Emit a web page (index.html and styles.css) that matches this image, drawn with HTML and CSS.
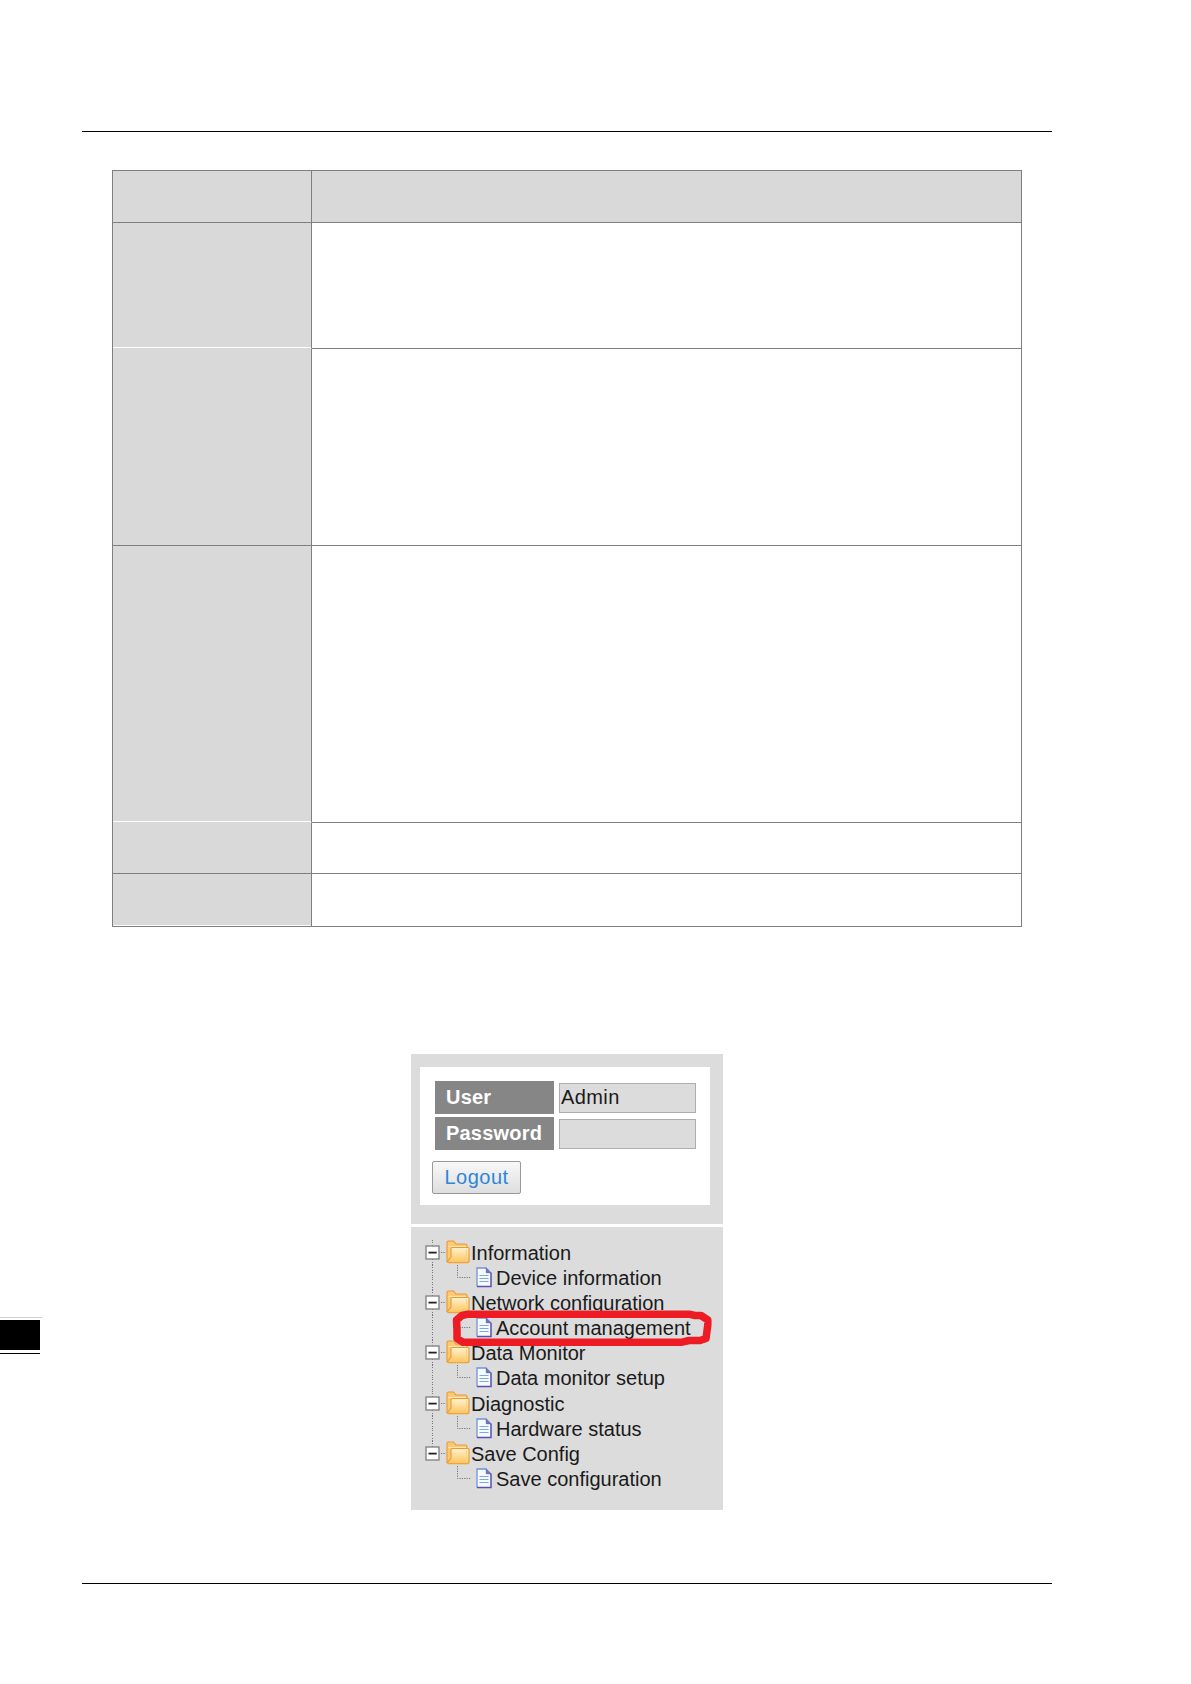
FILE: index.html
```html
<!DOCTYPE html>
<html lang="en">

<head>
    <meta charset="utf-8">
    <meta name="viewport" content="width=device-width, initial-scale=1.0">
    <title>Account management</title>
    <link rel="stylesheet" href="styles.css">
</head>

<body>

    <!-- shared icons -->
    <svg class="symbols" width="0" height="0">
        <defs>
            <linearGradient id="gold" x1="0" y1="0" x2="0" y2="1">
                <stop offset="0" stop-color="#fff3d0" />
                <stop offset="1" stop-color="#fdc35c" />
            </linearGradient>
        </defs>
        <symbol id="toggle" viewBox="0 0 22 25">
            <rect x="2" y="6" width="13" height="13" fill="#fff" stroke="#858585" stroke-width="1.4" />
            <path d="M4.500 12.600H12.700" stroke="#222" stroke-width="1.8" />
            <path d="M17 12.500H22" stroke="#777" stroke-dasharray="1.200 1.200" />
        </symbol>
        <symbol id="folder" viewBox="0 0 24 25">
            <path d="M1 21.500V2.500Q1 1 2.500 1H7.500L10 4H19.500Q21 4 21 5.500V10L5 22.500Z" fill="#fcc975" stroke="#e79a35" stroke-width="1.100" />
            <path d="M2 6.500H20" stroke="#ffe6b0" />
            <path d="M5 9Q5 7.500 6.500 7.500H22Q23 7.500 23 8.500V21Q23 22.700 21.500 22.700H3Q1.500 22.700 1.500 21.500L5 17Z" fill="url(#gold)" stroke="#e99b32" stroke-width="1.100" />
            <path d="M20.500 9V21" stroke="#fbd188" />
        </symbol>
        <symbol id="page" viewBox="0 0 16 25">
            <path d="M1 3H10.500L15 7.500V21.500H1Z" fill="#f7faff" />
            <path d="M1 21.500V3H10.500" fill="none" stroke="#6e93e0" stroke-width="1.3" />
            <path d="M15 7.500V21.500H1" fill="none" stroke="#5a50b0" stroke-width="1.5" />
            <path d="M10.300 3V7.700H15Z" fill="#7175c4" stroke="#555aae" stroke-width=".8" />
            <path d="M3.500 10.500H12.500M3.500 13.500H12.500M3.500 16.500H12.500" stroke="#78aae4" stroke-width="1.2" />
        </symbol>
        <symbol id="elbow" viewBox="0 0 16 25">
            <path d="M1.500 0V12.500H15" fill="none" stroke="#777" stroke-dasharray="1.200 1.200" />
        </symbol>
    </svg>

    <div class="page">

        <header class="rule"></header>

        <table class="spec">
            <tr class="row-head"><th></th><td></td></tr>
            <tr class="row-a"><th class="open"></th><td></td></tr>
            <tr class="row-b"><th></th><td></td></tr>
            <tr class="row-c"><th class="open"></th><td></td></tr>
            <tr class="row-d"><th></th><td></td></tr>
            <tr class="row-e"><th class="last"></th><td></td></tr>
        </table>

        <section class="sidebar">

            <div class="login">
                <form class="login-box">
                    <div class="field">
                        <label for="user">User</label>
                        <input id="user" type="text" value="Admin">
                    </div>
                    <div class="field">
                        <label for="password">Password</label>
                        <input id="password" type="password">
                    </div>
                    <button type="button">Logout</button>
                </form>
            </div>

            <nav class="menu">
                <ul class="tree">
                    <li class="branch"><svg class="toggle"><use href="#toggle" /></svg><svg class="folder"><use href="#folder" /></svg><span>Information</span></li>
                    <li class="leaf"><svg class="elbow"><use href="#elbow" /></svg><svg class="file"><use href="#page" /></svg><span>Device information</span></li>
                    <li class="branch"><svg class="toggle"><use href="#toggle" /></svg><svg class="folder"><use href="#folder" /></svg><span>Network configuration</span></li>
                    <li class="leaf"><svg class="elbow"><use href="#elbow" /></svg><svg class="file"><use href="#page" /></svg><span>Account management</span>
                        <svg class="marker" viewBox="0 0 262 38">
                            <path d="M17 5.200H238L244 6.500H250L256.800 11V16L255 29.500L249 31.500H238L231 33.200H12L6 29.500V21L5.500 11L11 6.500Z" />
                        </svg>
                    </li>
                    <li class="branch"><svg class="toggle"><use href="#toggle" /></svg><svg class="folder"><use href="#folder" /></svg><span>Data Monitor</span></li>
                    <li class="leaf"><svg class="elbow"><use href="#elbow" /></svg><svg class="file"><use href="#page" /></svg><span>Data monitor setup</span></li>
                    <li class="branch"><svg class="toggle"><use href="#toggle" /></svg><svg class="folder"><use href="#folder" /></svg><span>Diagnostic</span></li>
                    <li class="leaf"><svg class="elbow"><use href="#elbow" /></svg><svg class="file"><use href="#page" /></svg><span>Hardware status</span></li>
                    <li class="branch end"><svg class="toggle"><use href="#toggle" /></svg><svg class="folder"><use href="#folder" /></svg><span>Save Config</span></li>
                    <li class="leaf end"><svg class="elbow"><use href="#elbow" /></svg><svg class="file"><use href="#page" /></svg><span>Save configuration</span></li>
                </ul>
            </nav>

        </section>

        <footer class="rule"></footer>

        <div class="chapter-tab"></div>

    </div>

</body>

</html>
```

FILE: styles.css
```css
* {
    box-sizing: border-box;
}

body {
    margin: 0;
    background: #fff;
    font-family: "Liberation Sans", Arial, sans-serif;
    font-size: 20px;
    color: #1a1a1a;
}

.symbols {
    display: block;
    height: 0;
}

.page {
    position: relative;
    height: 1684px;
    padding: 131px 139px 0 82px;
    overflow: hidden;
}

.rule {
    height: 1px;
    background: #000;
}

/* specification table */

.spec {
    width: 910px;
    margin: 38px 0 0 30px;
    table-layout: fixed;
    border-collapse: separate;
    border-spacing: 0;
    border-top: 1px solid #7f7f7f;
    border-left: 1px solid #7f7f7f;
}

.spec th,
.spec td {
    padding: 0;
    border-right: 1px solid #7f7f7f;
    border-bottom: 1px solid #7f7f7f;
}

.spec th {
    width: 199px;
    background: #d9d9d9;
}

.spec th.open {
    border-bottom-color: #d9d9d9;
    box-shadow: inset 0 -1px #fff;
}

.spec th.last {
    box-shadow: inset 0 -1px #fff;
}

.row-head {
    height: 52px;
    background: #d9d9d9;
}

.row-a {
    height: 126px;
}

.row-b {
    height: 197px;
}

.row-c {
    height: 277px;
}

.row-d {
    height: 51px;
}

.row-e {
    height: 53px;
}

/* login panel and menu */

.sidebar {
    width: 312px;
    height: 456px;
    margin: 127px 0 73px 329px;
    display: flex;
    flex-direction: column;
    gap: 3px;
}

.login {
    height: 170px;
    padding: 13px 13px 19px 9px;
    background: #dcdcdc;
}

.login-box {
    height: 138px;
    padding: 14px 14px 0 15px;
    background: #fff;
}

.field {
    display: flex;
    align-items: center;
    gap: 5px;
    height: 33px;
    margin-bottom: 3px;
}

.field label {
    width: 119px;
    height: 33px;
    padding-left: 11px;
    line-height: 33px;
    font-weight: bold;
    letter-spacing: .2px;
    color: #fff;
    background: #868686;
}

.field input {
    width: 137px;
    height: 30px;
    padding: 0 0 0 1px;
    border: 1px solid #adadad;
    background: #dcdcdc;
    font: inherit;
    letter-spacing: .4px;
    color: inherit;
}

.login-box button {
    width: 89px;
    height: 33px;
    margin: 8px 0 0 -3px;
    padding: 0;
    border: 1px solid #999;
    border-radius: 2px;
    background: linear-gradient(#f8f8f8, #dedede);
    font: inherit;
    letter-spacing: .5px;
    color: #2e86d6;
}

.menu {
    flex: 1;
    padding: 13px 0 0 13px;
    background: #dcdcdc;
}

.tree {
    margin: 0;
    padding: 0;
    list-style: none;
}

.tree li {
    position: relative;
    display: flex;
    height: 25.1px;
    line-height: 26px;
    white-space: nowrap;
    background: repeating-linear-gradient(#777 0 1px, transparent 1px 2.4px) 8px 0 / 1px 100% no-repeat;
}

.tree li.branch.end {
    background-size: 1px 7px;
}

.tree li.leaf.end {
    background: none;
}

.tree svg {
    flex: none;
    height: 25px;
}

.toggle {
    width: 22px;
}

.folder {
    width: 24px;
    margin-right: 1px;
}

.elbow {
    width: 16px;
    margin-left: 32px;
}

.file {
    width: 16px;
    margin: 0 4px;
}

.tree .marker {
    position: absolute;
    left: 27px;
    top: -6px;
    width: 262px;
    height: 38px;
    z-index: 1;
}

.marker path {
    fill: none;
    stroke: #ed1c24;
    stroke-width: 7.5;
    stroke-linejoin: round;
}

/* chapter tab on the page edge */

.chapter-tab {
    position: absolute;
    left: 0;
    top: 1317px;
    width: 42px;
    height: 37px;
    border-top: 1px solid #d0d0d0;
    background:
        linear-gradient(#000, #000) 0 2px / 40px 30px no-repeat,
        linear-gradient(#000, #000) 0 35px / 40px 1px no-repeat;
}
```
